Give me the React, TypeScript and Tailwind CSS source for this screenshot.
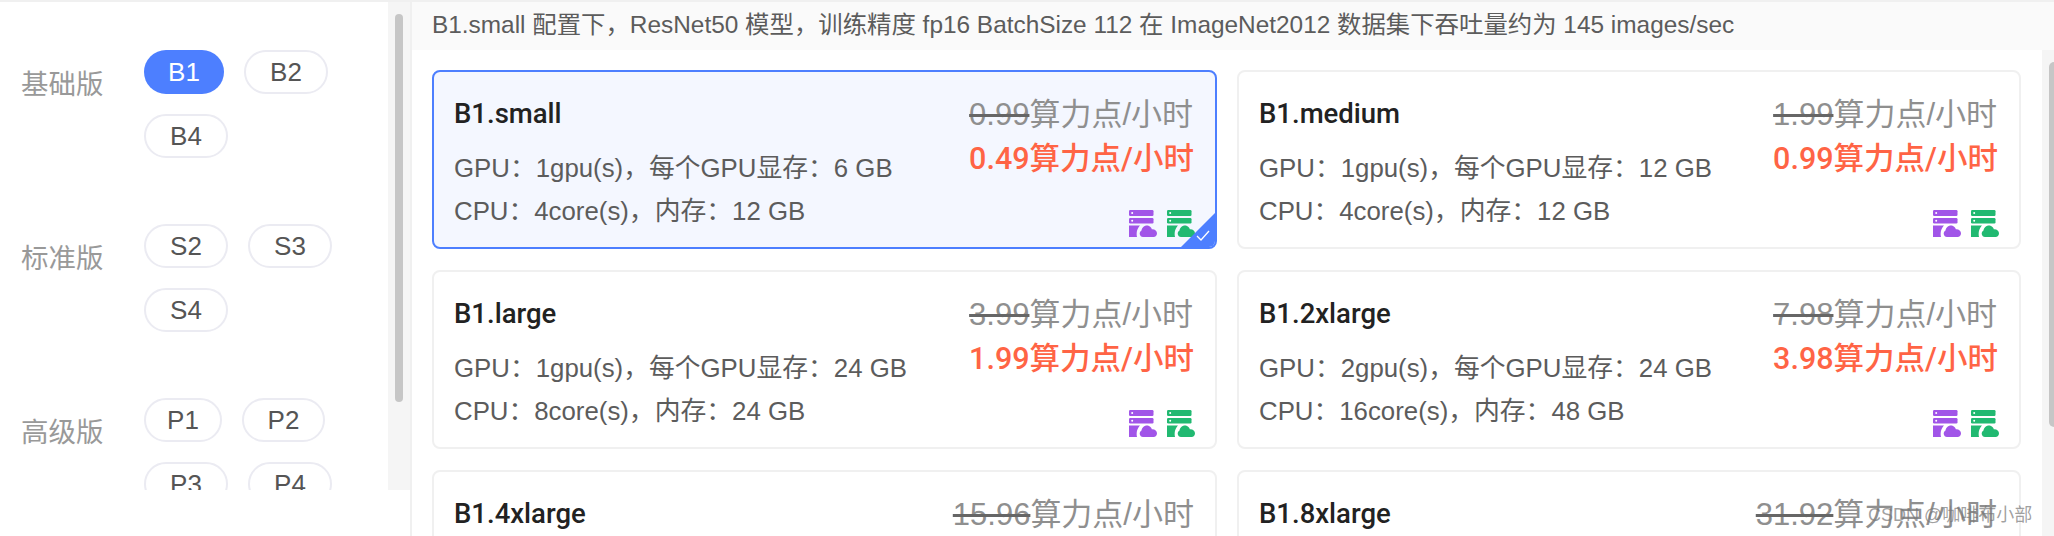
const sans = "font-['Liberation_Sans','Noto_Sans_CJK_SC',sans-serif]";
const medium = "font-['Roboto','Noto_Sans_CJK_SC',sans-serif] font-medium";

const groups = [
  {
    label: "基础版",
    items: [
      { t: "B1", w: "w-[80px]" },
      { t: "B2", w: "w-[84px]" },
      { t: "B4", w: "w-[84px]" },
    ],
  },
  {
    label: "标准版",
    items: [
      { t: "S2", w: "w-[84px]" },
      { t: "S3", w: "w-[84px]" },
      { t: "S4", w: "w-[84px]" },
    ],
  },
  {
    label: "高级版",
    items: [
      { t: "P1", w: "w-[78px]" },
      { t: "P2", w: "w-[83px]" },
      { t: "P3", w: "w-[84px]" },
      { t: "P4", w: "w-[84px]" },
    ],
  },
];

const specs = [
  { name: "B1.small", gpu: "GPU：1gpu(s)，每个GPU显存：6 GB", cpu: "CPU：4core(s)，内存：12 GB", old: "0.99", now: "0.49", active: true },
  { name: "B1.medium", gpu: "GPU：1gpu(s)，每个GPU显存：12 GB", cpu: "CPU：4core(s)，内存：12 GB", old: "1.99", now: "0.99" },
  { name: "B1.large", gpu: "GPU：1gpu(s)，每个GPU显存：24 GB", cpu: "CPU：8core(s)，内存：24 GB", old: "3.99", now: "1.99" },
  { name: "B1.2xlarge", gpu: "GPU：2gpu(s)，每个GPU显存：24 GB", cpu: "CPU：16core(s)，内存：48 GB", old: "7.98", now: "3.98" },
  { name: "B1.4xlarge", gpu: "GPU：4gpu(s)，每个GPU显存：24 GB", cpu: "CPU：32core(s)，内存：96 GB", old: "15.96", now: "7.98" },
  { name: "B1.8xlarge", gpu: "GPU：8gpu(s)，每个GPU显存：24 GB", cpu: "CPU：64core(s)，内存：192 GB", old: "31.92", now: "15.96" },
];

function ServerCloud({ className }: { className: string }) {
  return (
    <svg viewBox="0 0 28 27" className={className} fill="currentColor">
      <rect x="0" y="0" width="24.5" height="6" rx="1.2" />
      <rect x="0" y="8" width="24.5" height="5.5" rx="1.2" />
      <circle cx="3.2" cy="3" r="1" fill="#fff" />
      <circle cx="3.2" cy="10.8" r="1" fill="#fff" />
      <path d="M0 15.5h11c-2.5 2.500-4 6.500-3 11.500H0z" />
      <path d="M14 27c-3.500 0-4.500-5-1.500-6.500.5-3.500 4-6 7.500-4.500 1.800.7 2.500 2 2.800 3.200 3-.3 5.200 1.800 5.200 4 0 2.300-1.500 3.800-3.500 3.800z" />
    </svg>
  );
}

function SpecCard({ spec }: { spec: (typeof specs)[number] }) {
  return (
    <div
      className={
        spec.active
          ? "relative h-[179px] overflow-hidden rounded-[8px] border-2 border-[#4d7fff] bg-[#f4f7ff] pr-[21px] pl-[20px]"
          : "relative h-[179px] overflow-hidden rounded-[8px] border-2 border-[#f0f0f0] bg-white pr-[21px] pl-[20px]"
      }
    >
      <div className="flex justify-between">
        <div>
          <div className={`mt-[24px] text-[27.5px] leading-[36px] text-[#222] ${medium}`}>{spec.name}</div>
          <div className="mt-[14px] text-[25.8px] leading-[44px] text-[#5c5c5c]">{spec.gpu}</div>
          <div className="text-[25.8px] leading-[42px] text-[#5c5c5c]">{spec.cpu}</div>
        </div>
        <div className="mt-[22px]">
          <div className="text-[31px] leading-[42px] text-[#8f8f8f]">
            <span className="line-through decoration-[#666]">{spec.old}</span>算力点/小时
          </div>
          <div className={`mt-[2px] text-[30.5px] leading-[42px] text-[#ff6445] ${medium}`}>{spec.now}算力点/小时</div>
        </div>
      </div>
      <div className="absolute right-[20px] bottom-[10px] flex gap-[10px]">
        <ServerCloud className="h-[27px] w-[28px] text-[#a155e8]" />
        <ServerCloud className="h-[27px] w-[28px] text-[#21b971]" />
      </div>
      {spec.active && (
        <svg viewBox="0 0 34 34" className="absolute right-0 bottom-0 h-[34px] w-[34px]">
          <path d="M34 0V34H0z" fill="#4d7fff" />
          <path d="M16 23l4 4 8-9" fill="none" stroke="#fff" strokeWidth="1.3" />
        </svg>
      )}
    </div>
  );
}

export default function App() {
  return (
    <div className={`relative h-[536px] w-[2054px] overflow-hidden bg-white ${sans}`}>
      <div className="h-[2px] bg-[#f0f0f0]" />
      <div className="flex h-[534px]">
        <div className="w-[412px] shrink-0 border-r-2 border-[#f0f0f0]">
          <div className="flex h-[488px] overflow-hidden">
            <div className="w-[388px] shrink-0 pt-[48px]">
              {groups.map((g) => (
                <div key={g.label} className="mb-[66px] flex items-start">
                  <div className="mt-[15px] w-[144px] shrink-0 pl-[21px] text-[27.5px] leading-[40px] text-[#999]">{g.label}</div>
                  <div className="flex w-[210px] flex-wrap gap-x-[20px] gap-y-[20px]">
                    {g.items.map(({ t, w }) => (
                      <div
                        key={t}
                        className={
                          t === "B1"
                            ? `flex h-[44px] items-center justify-center rounded-full bg-[#4d7fff] text-[26px] text-white ${w}`
                            : `flex h-[44px] items-center justify-center rounded-full border-2 border-[#ebebf2] text-[26px] text-[#555] ${w}`
                        }
                      >
                        {t}
                      </div>
                    ))}
                  </div>
                </div>
              ))}
            </div>
            <div className="flex-1 bg-[#f5f5f5] px-[7px] pt-[12px]">
              <div className="h-[388px] w-[8px] rounded-full bg-[#c6c6c6]" />
            </div>
          </div>
        </div>
        <div className="flex min-w-0 flex-1 flex-col">
          <div className="h-[48px] shrink-0 bg-[#fafafa] pl-[20px] text-[24.4px] leading-[46px] text-[#5c5c5c]">
            B1.small 配置下，ResNet50 模型，训练精度 fp16 BatchSize 112 在 ImageNet2012 数据集下吞吐量约为 145 images/sec
          </div>
          <div className="flex min-h-0 flex-1">
            <div className="grid flex-1 grid-cols-[785px_784px] content-start gap-x-[20px] gap-y-[21px] overflow-hidden pt-[20px] pl-[20px]">
              {specs.map((s) => (
                <SpecCard key={s.name} spec={s} />
              ))}
            </div>
            <div className="w-[12px] shrink-0 bg-[#f5f5f5] pt-[12px] pl-[7px]">
              <div className="h-[365px] w-[5px] rounded-l-full bg-[#c6c6c6]" />
            </div>
          </div>
        </div>
      </div>
      <div className="absolute top-[503px] left-[1868px] text-[18px] leading-[24px] whitespace-nowrap text-[#777]/70">
        CSDN @咖啡布小部
      </div>
    </div>
  );
}
